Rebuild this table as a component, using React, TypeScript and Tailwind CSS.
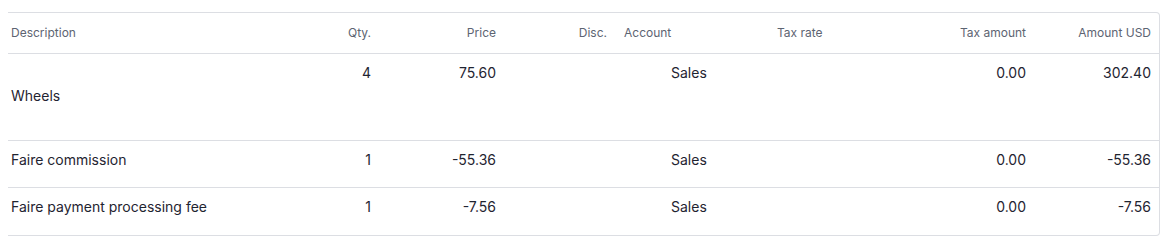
import React from "react";

type Row = {
  desc: string;
  qty: string;
  price: string;
  account: string;
  tax: string;
  amount: string;
  tall?: boolean;
};

const rows: Row[] = [
  { desc: "Wheels", qty: "4", price: "75.60", account: "Sales", tax: "0.00", amount: "302.40", tall: true },
  { desc: "Faire commission", qty: "1", price: "-55.36", account: "Sales", tax: "0.00", amount: "-55.36" },
  { desc: "Faire payment processing fee", qty: "1", price: "-7.56", account: "Sales", tax: "0.00", amount: "-7.56" },
];

const grid =
  "grid grid-cols-[292px_79px_125px_111px_154px_131px_134px_125px]";

export default function App() {
  return (
    <div
      className="w-[1168px] h-[241px] bg-white pt-3 pl-2"
      style={{ fontFamily: 'Inter, "Liberation Sans", Arial, sans-serif' }}
    >
      <div className="w-[1152px] border-t border-r border-b border-[#dcdee3] rounded-r-[4px]">
        <div className={`${grid} h-[41px] items-center text-[12px] text-[#5d6472] border-b border-[#dcdee3]`}>
          <div className="pl-[3px]">Description</div>
          <div className="text-right pr-2">Qty.</div>
          <div className="text-right pr-2">Price</div>
          <div className="text-right pr-2">Disc.</div>
          <div className="pl-[9px]">Account</div>
          <div className="pl-2">Tax rate</div>
          <div className="text-right pr-2">Tax amount</div>
          <div className="text-right pr-2">Amount USD</div>
        </div>
        {rows.map((r, i) => (
          <div
            key={i}
            className={`${grid} text-[14px] leading-5 text-[#1f2431] ${
              i < rows.length - 1 ? "border-b border-[#dcdee3]" : ""
            } ${r.tall ? "h-[87px]" : "h-[47px]"}`}
          >
            <div className={r.tall ? "pl-[3px] self-center pb-[2px]" : "pl-[3px] pt-[9px]"}>{r.desc}</div>
            <div className="text-right pr-2 pt-[9px]">{r.qty}</div>
            <div className="text-right pr-2 pt-[9px]">{r.price}</div>
            <div className="text-right pr-2 pt-[9px]"></div>
            <div className="pl-[56px] pt-[9px]">{r.account}</div>
            <div className="pl-2 pt-[9px]"></div>
            <div className="text-right pr-2 pt-[9px]">{r.tax}</div>
            <div className="text-right pr-2 pt-[9px]">{r.amount}</div>
          </div>
        ))}
      </div>
    </div>
  );
}
